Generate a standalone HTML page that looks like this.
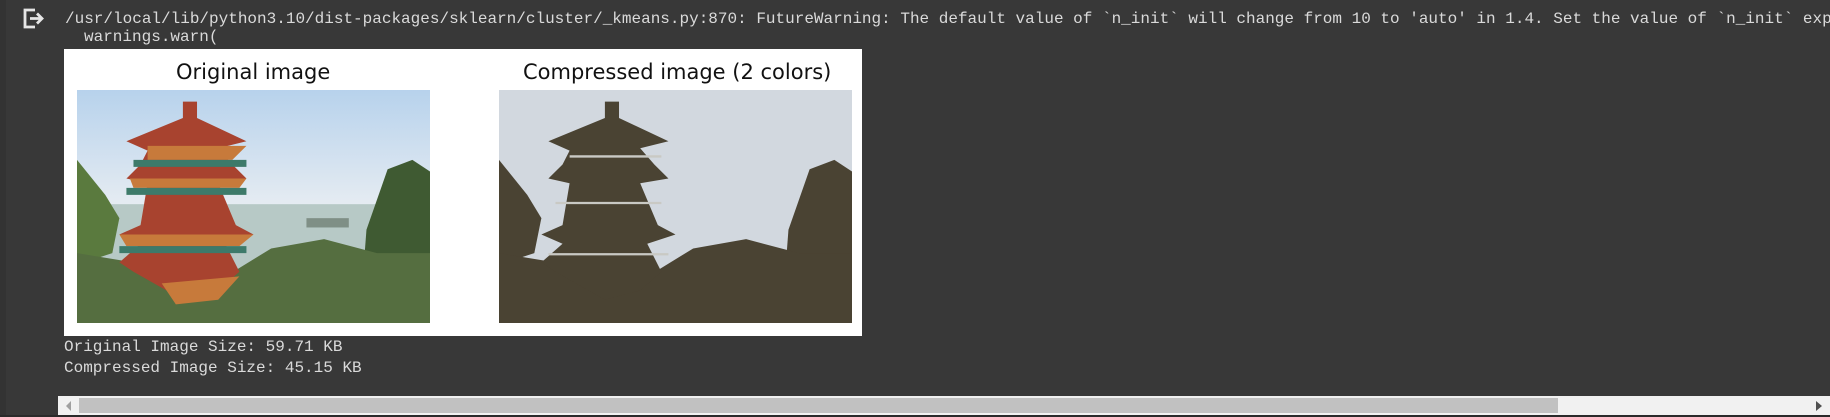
<!DOCTYPE html>
<html><head><meta charset="utf-8"><style>
html,body{margin:0;padding:0;width:1830px;height:417px;overflow:hidden;background:#383838;}
body{position:relative;font-family:"Liberation Mono","DejaVu Sans Mono",monospace;color:#dadada;font-size:16px;}
.gut{position:absolute;left:0;top:0;width:6px;height:417px;background:#333;}
.t{position:absolute;white-space:pre;line-height:21px;}
.fig{position:absolute;left:64px;top:49px;width:798px;height:287px;background:#fff;}
.ttl{position:absolute;font-family:"DejaVu Sans","Liberation Sans",sans-serif;font-size:21px;color:#111;top:11px;white-space:nowrap;}
.img{position:absolute;top:41px;width:353px;height:233px;}
.sb{position:absolute;left:58px;top:396px;width:1772px;height:19px;background:#f1f1f1;}
.th{position:absolute;left:21px;top:2px;width:1479px;height:15px;background:#c1c1c1;}
.bl{position:absolute;left:0;top:415px;width:1830px;height:2px;background:#2a2a2a;}
</style></head><body>
<div class="gut"></div>
<svg style="position:absolute;left:22px;top:8px" width="24" height="21" viewBox="0 0 24 21">
<path d="M13 2H3v17h10" fill="none" stroke="#e6e6e6" stroke-width="2.8"/>
<path d="M8 10.5h12M15 5.5l5 5-5 5" fill="none" stroke="#e6e6e6" stroke-width="2.8"/>
</svg>
<div class="t" style="left:65px;top:9px">/usr/local/lib/python3.10/dist-packages/sklearn/cluster/_kmeans.py:870: FutureWarning: The default value of `n_init` will change from 10 to 'auto' in 1.4. Set the value of `n_init` exp</div>
<div class="t" style="left:84px;top:27px">warnings.warn(</div>
<div class="fig">
<div class="ttl" style="left:112px">Original image</div>
<div class="ttl" style="left:459px">Compressed image (2 colors)</div>
<svg class="img" style="left:13px" viewBox="0 0 100 100" preserveAspectRatio="none">
<defs><linearGradient id="sky" x1="0" y1="0" x2="0" y2="1"><stop offset="0" stop-color="#b7d2ec"/><stop offset="0.5" stop-color="#e6ecf2"/><stop offset="1" stop-color="#dfe6ea"/></linearGradient></defs>
<rect width="100" height="100" fill="url(#sky)"/>
<rect x="0" y="49" width="100" height="30" fill="#b7c9c6"/>
<rect x="65" y="55" width="12" height="4" fill="#7f8f86"/>
<path d="M0 30 L8 45 L12 55 L10 70 L0 75Z" fill="#5a7a3e"/>
<path d="M88 34 L95 30 L100 35 L100 100 L80 100 L82 60 Z" fill="#3f5a32"/>
<path d="M0 70 L20 75 L40 82 L55 68 L70 64 L85 70 L100 70 L100 100 L0 100Z" fill="#556e40"/>
<path d="M30 5 L34 5 L34 12 L48 22 L40 25 L44 32 L48 38 L40 40 L45 58 L50 62 L42 66 L46 78 L40 86 L30 90 L16 78 L12 74 L18 66 L12 62 L18 58 L20 40 L14 38 L18 32 L20 26 L14 22 L30 12Z" fill="#a8432f"/>
<path d="M20 24 L48 24 L44 30 L20 30Z M15 38 L48 38 L46 42 L16 42Z M12 62 L50 62 L46 67 L14 67Z M24 83 L46 80 L40 90 L28 92Z" fill="#c77a3b"/>
<path d="M16 30 L48 30 L48 33 L16 33Z M14 42 L48 42 L48 45 L14 45Z M12 67 L48 67 L48 70 L12 70Z" fill="#3d7a6a"/>
</svg>
<svg class="img" style="left:435px" viewBox="0 0 100 100" preserveAspectRatio="none">
<rect width="100" height="100" fill="#d2d8df"/>
<path d="M0 30 L8 45 L12 55 L10 70 L0 75Z" fill="#4a4333"/>
<path d="M88 34 L95 30 L100 35 L100 100 L80 100 L82 60 Z" fill="#4a4333"/>
<path d="M0 70 L20 75 L40 82 L55 68 L70 64 L85 70 L100 70 L100 100 L0 100Z" fill="#4a4333"/>
<path d="M30 5 L34 5 L34 12 L48 22 L40 25 L44 32 L48 38 L40 40 L45 58 L50 62 L42 66 L46 78 L40 86 L30 90 L16 78 L12 74 L18 66 L12 62 L18 58 L20 40 L14 38 L18 32 L20 26 L14 22 L30 12Z" fill="#4a4333"/>
<path d="M20 28 L46 28 L46 29 L20 29Z M16 48 L46 48 L46 49 L16 49Z M14 70 L48 70 L48 71 L14 71Z" fill="#c9c9c4"/>
</svg>
</div>
<div class="t" style="left:64px;top:337px">Original Image Size: 59.71 KB</div>
<div class="t" style="left:64px;top:358px">Compressed Image Size: 45.15 KB</div>
<div class="sb"><div class="th"></div>
<svg style="position:absolute;left:8px;top:5px" width="6" height="10"><path d="M5 0L0 5L5 10Z" fill="#a0a0a0"/></svg>
<svg style="position:absolute;right:8px;top:5px" width="6" height="10"><path d="M0 0L6 5L0 10Z" fill="#505050"/></svg>
</div>
<div class="bl"></div>
</body></html>
